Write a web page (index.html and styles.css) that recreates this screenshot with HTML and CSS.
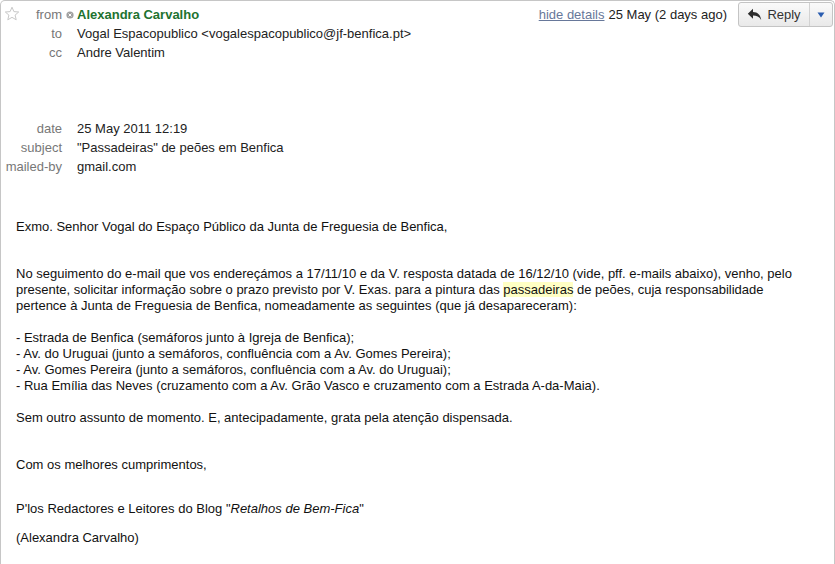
FILE: index.html
```html
<!DOCTYPE html>
<html lang="pt">
<head>
  <meta charset="UTF-8">
  <title>Passadeiras de peões em Benfica</title>
  <link rel="stylesheet" href="styles.css">
</head>
<body>
  <div class="message">
    <div class="header">
      <div class="row">
        <div class="label label-star">
          <svg class="star" width="16" height="16" viewBox="0 0 16 16">
            <path d="M8 1.2l1.9 4.4 4.8.4-3.6 3.1 1.1 4.7L8 11.3l-4.2 2.5 1.1-4.7L1.3 6l4.8-.4z" fill="none" stroke="#c8c8c8" stroke-width="1"/>
          </svg>
          <span>from</span>
        </div>
        <div class="value sender">
          <svg class="presence" width="8" height="8" viewBox="0 0 8 8">
            <circle cx="4" cy="4" r="3.6" fill="#a0a0a0"/>
            <path d="M2.6 2.6l2.8 2.8M5.4 2.6L2.6 5.4" stroke="#fff" stroke-width="1"/>
          </svg>
          Alexandra Carvalho
        </div>
        <div class="meta">
          <a href="#" class="details-link">hide details</a>
          <span class="when">25 May (2 days ago)</span>
          <div class="reply-group">
            <button class="reply-btn">
              <svg width="15" height="13" viewBox="0 0 15 13">
                <path d="M6 0.8L0.8 5.8 6 10.8V7.6c3.6 0 6.2 1 8.2 4.4C13.6 7 10.8 4 6 3.9z" fill="#2d2d2d"/>
              </svg>
              Reply
            </button>
            <button class="more-btn">
              <svg width="8" height="6" viewBox="0 0 8 6">
                <path d="M0.5 0.5h7L4 5.5z" fill="#2a5db0"/>
              </svg>
            </button>
          </div>
        </div>
      </div>
      <div class="row">
        <div class="label">to</div>
        <div class="value">Vogal Espacopublico &lt;vogalespacopublico@jf-benfica.pt&gt;</div>
      </div>
      <div class="row">
        <div class="label">cc</div>
        <div class="value">Andre Valentim</div>
      </div>

      <div class="row row-group">
        <div class="label">date</div>
        <div class="value">25 May 2011 12:19</div>
      </div>
      <div class="row">
        <div class="label">subject</div>
        <div class="value">"Passadeiras" de peões em Benfica</div>
      </div>
      <div class="row">
        <div class="label">mailed-by</div>
        <div class="value">gmail.com</div>
      </div>
    </div>

    <div class="body">
      <p class="p-first">Exmo. Senhor Vogal do Espaço Público da Junta de Freguesia de Benfica,</p>
      <p class="p-wide">No seguimento do e-mail que vos endereçámos a 17/11/10 e da V. resposta datada de 16/12/10 (vide, pff. e-mails abaixo), venho, pelo<br>presente, solicitar informação sobre o prazo previsto por V. Exas. para a pintura das <span class="hl">passadeiras</span> de peões, cuja responsabilidade<br>pertence à Junta de Freguesia de Benfica, nomeadamente as seguintes (que já desapareceram):</p>
      <p>- Estrada de Benfica (semáforos junto à Igreja de Benfica);<br>
      - Av. do Uruguai (junto a semáforos, confluência com a Av. Gomes Pereira);<br>
      - Av. Gomes Pereira (junto a semáforos, confluência com a Av. do Uruguai);<br>
      - Rua Emília das Neves (cruzamento com a Av. Grão Vasco e cruzamento com a Estrada A-da-Maia).</p>
      <p>Sem outro assunto de momento. E, antecipadamente, grata pela atenção dispensada.</p>
      <p class="p-wide">Com os melhores cumprimentos,</p>
      <p class="p-sign">P'los Redactores e Leitores do Blog "<em>Retalhos de Bem-Fica</em>"</p>
      <p class="p-close">(Alexandra Carvalho)</p>
    </div>
  </div>
</body>
</html>
```

FILE: styles.css
```css
html, body {
  height: 100%;
}

body {
  margin: 0;
  font-family: "Liberation Sans", Arial, sans-serif;
  font-size: 13px;
  color: #222;
  background: #fff;
}

.message {
  box-sizing: border-box;
  width: 835px;
  min-height: 100%;
  border: 1px solid #c6c6c6;
  border-bottom: none;
  border-radius: 5px 5px 0 0;
}

.header {
  padding-top: 4px;
}

.row {
  display: flex;
  align-items: center;
  height: 19px;
}

.row-group {
  margin-top: 57px;
}

.label {
  box-sizing: border-box;
  width: 61px;
  flex-shrink: 0;
  text-align: right;
  color: #777;
  white-space: nowrap;
}

.label-star {
  display: flex;
  justify-content: space-between;
  align-items: center;
  padding-left: 3px;
}

.star {
  display: block;
  margin-top: -2px;
}

.value {
  padding-left: 15px;
  white-space: nowrap;
}

.sender {
  display: flex;
  align-items: center;
  padding-left: 4px;
  font-weight: bold;
  color: #21722f;
}

.presence {
  display: block;
  margin-right: 3px;
}

.meta {
  display: flex;
  align-items: center;
  margin-left: auto;
  margin-right: 1px;
}

.details-link {
  color: #67789a;
  text-decoration: underline;
}

.when {
  margin-left: 4px;
  color: #222;
}

.reply-group {
  display: flex;
  height: 23px;
  margin: -2px 0 -2px 11px;
  border: 1px solid #c4c4c4;
  border-radius: 3px;
  background: linear-gradient(#fafafa, #e9e9e9);
}

.reply-group button {
  display: flex;
  align-items: center;
  border: none;
  background: none;
  font-family: inherit;
  font-size: 13px;
  color: #333;
  padding: 0;
  cursor: pointer;
}

.reply-btn {
  gap: 5px;
  width: 71px;
  justify-content: center;
  border-right: 1px solid #d2d2d2 !important;
}

.more-btn {
  width: 22px;
  justify-content: center;
}

.body {
  padding: 0 15px;
  line-height: 16px;
  color: #111;
}

.body p {
  margin: 16px 0 0;
}

.body .p-first {
  margin-top: 43px;
}

.body .p-wide {
  margin-top: 31px;
}

.body .p-sign {
  margin-top: 28px;
}

.body .p-close {
  margin-top: 13px;
}

.hl {
  background: #ffffc4;
}
```
